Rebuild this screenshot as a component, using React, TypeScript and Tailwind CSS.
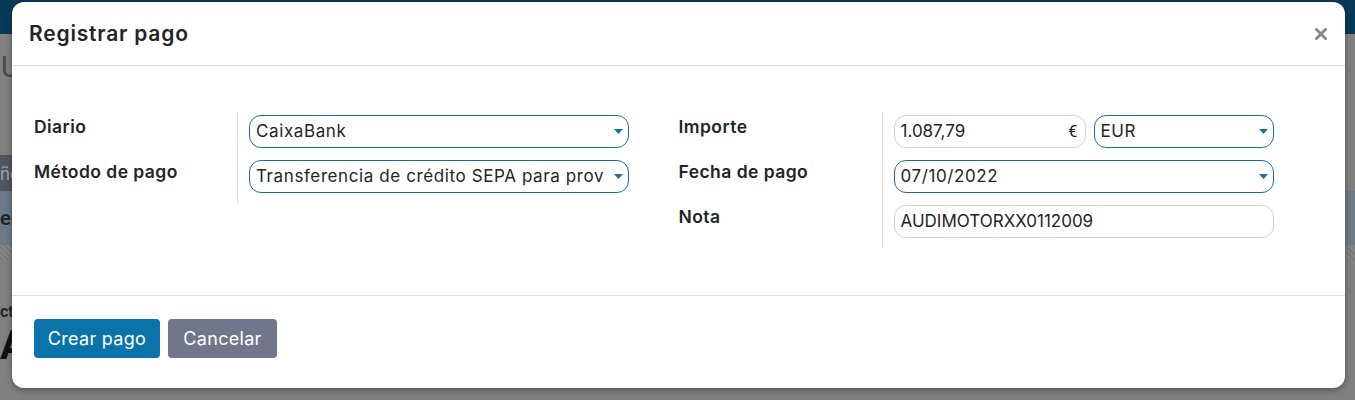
import React from 'react';

const labelFont = { fontFamily: 'Inter, "Noto Sans", sans-serif' };

function Caret() {
  return (
    <svg width="9" height="5" viewBox="0 0 9 5" className="shrink-0">
      <path d="M0 0 L9 0 L4.5 5 Z" fill="#1b6fa6" />
    </svg>
  );
}

function SelectField({ value, className = '' }: { value: string; className?: string }) {
  return (
    <div
      className={`flex h-[33px] items-center justify-between rounded-[12px] border border-[#1a6da3] pl-[6px] pr-[5px] ${className}`}
    >
      <span className="whitespace-nowrap text-[17px] tracking-[0.6px] text-[#212529]" style={labelFont}>{value}</span>
      <Caret />
    </div>
  );
}

function TextField({ value, suffix, className = '' }: { value: string; suffix?: string; className?: string }) {
  return (
    <div
      className={`flex h-[33px] items-center justify-between rounded-[12px] border border-[#d3d3d3] pl-[6px] pr-[7px] ${className}`}
    >
      <span className="text-[17px] text-[#212529]" style={labelFont}>{value}</span>
      {suffix && <span className="text-[17px] text-[#212529]">{suffix}</span>}
    </div>
  );
}

function Row({ label, children }: { label: string; children: React.ReactNode }) {
  return (
    <div className="flex h-[45px]">
      <div className="w-[203px] pt-[1px] text-[17.5px] font-semibold tracking-[0.45px] text-[#212529]" style={labelFont}>
        {label}
      </div>
      <div className="border-l border-[#dcdcdc] pl-[11px] pt-[2px]">{children}</div>
    </div>
  );
}

export default function App() {
  return (
    <div className="relative h-[400px] w-[1355px] overflow-hidden bg-[#808080]" style={{ fontFamily: 'Roboto, sans-serif' }}>
      {/* page behind the overlay */}
      <div className="flex h-full flex-col">
        <div className="h-[34px] bg-[#073a58]" />
        <div className="h-[121px] pt-[18px] pl-[1px] text-[30px] leading-none text-[#4a4a4a]">U</div>
        <div className="flex h-[36px] w-[40px] items-center bg-[#50555d] text-[18px] text-[#9aa0a8]">ño</div>
        <div className="flex h-[54px] items-center bg-[#6c7b88] text-[20px] font-semibold text-[#1d2227]">er</div>
        <div className="h-[17px] bg-[repeating-linear-gradient(45deg,#858585_0px,#858585_2px,#7a7a7a_2px,#7a7a7a_4px)]" />
        <div className="pt-[38px] text-[16px] font-semibold text-[#222]">ctu</div>
        <div className="pt-[2px] text-[40px] font-bold leading-none text-[#111]">A</div>
      </div>

      {/* modal */}
      <div className="absolute left-[12px] top-[2px] flex h-[386px] w-[1333px] flex-col rounded-[12px] bg-white shadow-[0_2px_6px_rgba(0,0,0,0.35)]">
        <div className="flex h-[64px] items-center justify-between border-b border-[#dedde6] pl-[17px] pr-[18px]">
          <h4 className="text-[21px] font-semibold tracking-[0.8px] text-[#212529]" style={labelFont}>
            Registrar pago
          </h4>
          <svg width="12" height="12" viewBox="0 0 12 12">
            <path d="M1.5 1.5 L10.5 10.5 M10.5 1.5 L1.5 10.5" stroke="#8a8a8a" strokeWidth="3" strokeLinecap="square" />
          </svg>
        </div>

        <div className="grid flex-1 grid-cols-2 px-[22px] pt-[47px]">
          <div>
            <Row label="Diario">
              <SelectField value="CaixaBank" className="w-[380px]" />
            </Row>
            <Row label="Método de pago">
              <SelectField value="Transferencia de crédito SEPA para prov" className="w-[380px]" />
            </Row>
          </div>
          <div>
            <Row label="Importe">
              <div className="flex gap-[8px]">
                <TextField value="1.087,79" suffix="€" className="w-[192px]" />
                <SelectField value="EUR" className="w-[180px]" />
              </div>
            </Row>
            <Row label="Fecha de pago">
              <SelectField value="07/10/2022" className="w-[380px]" />
            </Row>
            <Row label="Nota">
              <TextField value="AUDIMOTORXX0112009" className="w-[380px]" />
            </Row>
          </div>
        </div>

        <div className="flex h-[93px] gap-[8px] border-t border-[#dedede] px-[22px] pt-[23px]" style={labelFont}>
          <button className="h-[39px] w-[126px] rounded-[4px] bg-[#0a73aa] text-[18px] tracking-[0.3px] text-white">Crear pago</button>
          <button className="h-[39px] w-[109px] rounded-[4px] bg-[#71768a] text-[18px] tracking-[0.3px] text-white">Cancelar</button>
        </div>
      </div>
    </div>
  );
}
